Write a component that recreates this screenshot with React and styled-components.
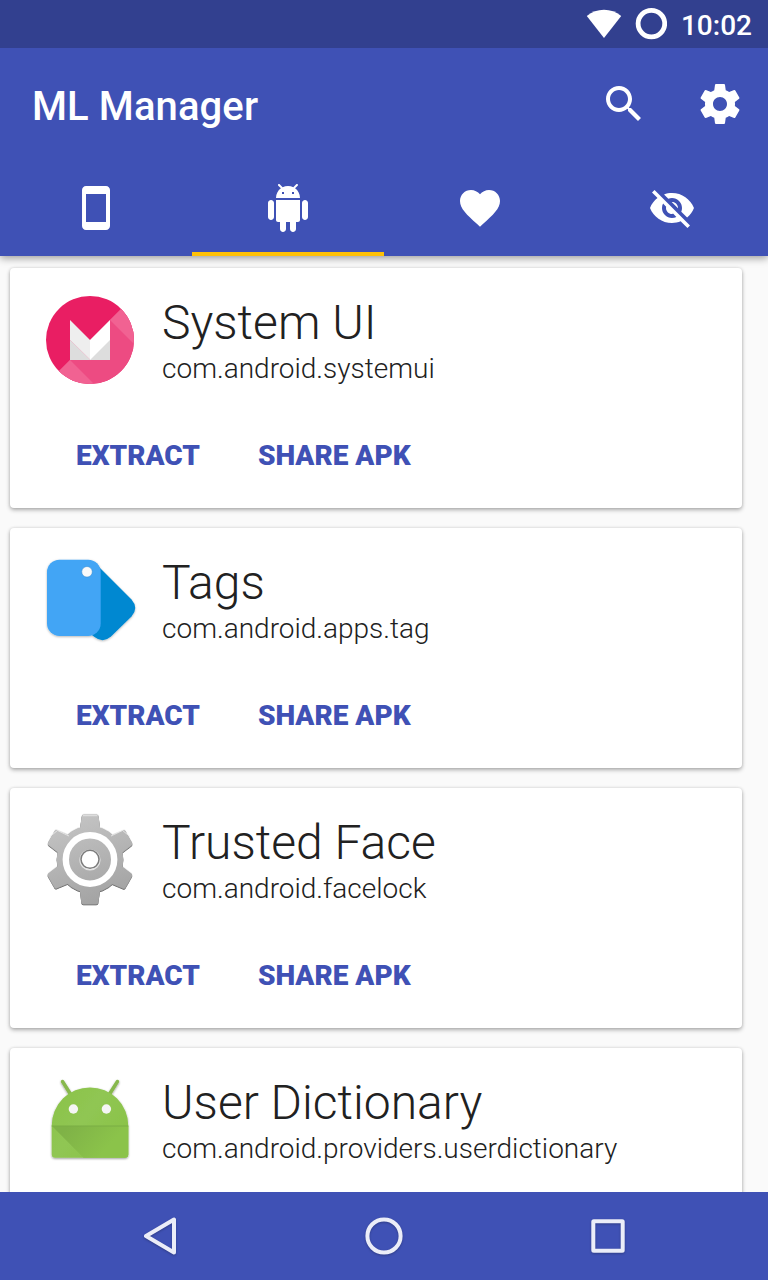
import React from "react";
import styled, { createGlobalStyle } from "styled-components";

const GlobalStyle = createGlobalStyle`
  * { box-sizing: border-box; }
  body { margin: 0; background: #fafafa; font-family: Roboto, sans-serif; }
`;

const Screen = styled.div`
  display: flex;
  flex-direction: column;
  width: 768px;
  height: 1280px;
  overflow: hidden;
  background: #fafafa;
`;

const StatusBar = styled.div`
  position: relative;
  z-index: 2;
  display: flex;
  flex: none;
  align-items: center;
  justify-content: flex-end;
  height: 48px;
  padding-right: 16px;
  background: #32408f;
  color: #fff;
`;

const StatusIcon = styled.svg`
  display: block;
  width: ${(p) => p.$width}px;
  height: 48px;
  margin-right: ${(p) => p.$after}px;
`;

const Clock = styled.span`
  font-size: 28px;
  font-weight: 500;
  line-height: 33px;
  padding-top: 3px;
`;

const Header = styled.header`
  position: relative;
  z-index: 1;
  flex: none;
  height: 208px;
  background: #3f51b5;
  color: #fff;
  box-shadow: 0 2px 8px rgba(0, 0, 0, 0.4);
`;

const Toolbar = styled.div`
  display: flex;
  align-items: center;
  height: 112px;
  padding: 0 24px 0 32px;
`;

const Title = styled.h1`
  flex: 1;
  margin: 0;
  padding-top: 6px;
  font-size: 40px;
  font-weight: 500;
  letter-spacing: 0.1px;
  line-height: 48px;
`;

const Actions = styled.div`
  display: flex;
  gap: 48px;
`;

const IconButton = styled.button`
  display: block;
  padding: 0;
  border: 0;
  background: none;
  color: inherit;
`;

const Glyph = styled.svg`
  display: block;
  width: 48px;
  height: 48px;
  fill: currentColor;
`;

const Tabs = styled.nav`
  display: grid;
  grid-template-columns: repeat(4, 1fr);
  height: 96px;
`;

const Tab = styled.div`
  display: flex;
  align-items: center;
  justify-content: center;
  padding-top: 4px;
  border-bottom: 4px solid ${(p) => (p.$active ? "#ffc107" : "transparent")};
`;

const List = styled.main`
  display: flex;
  flex: 1;
  flex-direction: column;
  gap: 20px;
  min-height: 0;
  padding: 12px 26px 0 10px;
  overflow: hidden;
`;

const Card = styled.article`
  flex: none;
  height: 240px;
  padding: 24px 32px;
  border-radius: 4px;
  background: #fff;
  box-shadow: 0 2px 4px rgba(0, 0, 0, 0.3), 0 0 3px rgba(0, 0, 0, 0.12);
`;

const AppInfo = styled.div`
  display: flex;
  gap: 24px;
`;

const AppIcon = styled.svg`
  display: block;
  flex: none;
  width: 96px;
  height: 96px;
  overflow: visible;
`;

const AppText = styled.div`
  padding-top: 3px;
  color: #212121;
  font-weight: 300;
  white-space: nowrap;
`;

const AppName = styled.div`
  font-size: 48px;
  line-height: 56px;
`;

const PackageName = styled.div`
  padding-top: 1px;
  font-size: 28px;
  line-height: 33px;
`;

const CardActions = styled.div`
  display: flex;
  gap: 58px;
  padding: 51px 0 0 34px;
`;

const TextButton = styled.button`
  padding: 0;
  border: 0;
  background: none;
  color: #3f51b5;
  font-family: inherit;
  font-size: 28px;
  font-weight: 900;
  line-height: 33px;
`;

const NavBar = styled.footer`
  position: relative;
  display: flex;
  flex: none;
  justify-content: center;
  gap: 176px;
  align-items: center;
  height: 88px;
  background: #3f51b5;
`;

const NavGlyph = styled.svg`
  display: block;
  width: 48px;
  height: 48px;
  fill: none;
  stroke: #ebedf8;
  stroke-width: 4;
  stroke-linejoin: round;
  filter: drop-shadow(0 1px 1px rgba(0, 0, 0, 0.25));
`;

const paths = {
  search:
    "M15.5 14h-.79l-.28-.27C15.41 12.59 16 11.11 16 9.5 16 5.91 13.09 3 9.5 3S3 5.91 3 9.5 5.91 16 9.5 16c1.61 0 3.09-.59 4.23-1.57l.27.28v.79l5 4.99L20.49 19l-4.99-5zm-6 0C7.01 14 5 11.99 5 9.5S7.01 5 9.5 5 14 7.01 14 9.5 11.99 14 9.5 14z",
  settings:
    "M19.43 12.98c.04-.32.07-.64.07-.98s-.03-.66-.07-.98l2.11-1.65c.19-.15.24-.42.12-.64l-2-3.46c-.12-.22-.39-.3-.61-.22l-2.49 1c-.52-.4-1.08-.73-1.69-.98l-.38-2.65C14.46 2.18 14.25 2 14 2h-4c-.25 0-.46.18-.49.42l-.38 2.65c-.61.25-1.17.59-1.69.98l-2.49-1c-.23-.09-.49 0-.61.22l-2 3.46c-.13.22-.07.49.12.64l2.11 1.65c-.04.32-.07.65-.07.98s.03.66.07.98l-2.11 1.65c-.19.15-.24.42-.12.64l2 3.46c.12.22.39.3.61.22l2.49-1c.52.4 1.08.73 1.69.98l.38 2.65c.03.24.24.42.49.42h4c.25 0 .46-.18.49-.42l.38-2.65c.61-.25 1.17-.59 1.69-.98l2.49 1c.23.09.49 0 .61-.22l2-3.46c.12-.22.07-.49-.12-.64l-2.11-1.65zM12 15.5c-1.93 0-3.5-1.57-3.5-3.5s1.57-3.5 3.5-3.5 3.5 1.57 3.5 3.5-1.57 3.5-3.5 3.5z",
  phone:
    "M17 1.01L7 1c-1.1 0-1.99.9-1.99 2v18c0 1.1.89 2 1.99 2h10c1.1 0 2-.9 2-2V3c0-1.1-.9-1.99-2-1.99zM17 19H7V5h10v14z",
  android:
    "M6 18c0 .55.45 1 1 1h1v3.5c0 .83.67 1.5 1.5 1.5s1.5-.67 1.5-1.5V19h2v3.5c0 .83.67 1.5 1.5 1.5s1.5-.67 1.5-1.5V19h1c.55 0 1-.45 1-1V8H6v10zM3.5 8C2.67 8 2 8.67 2 9.5v7c0 .83.67 1.5 1.5 1.5S5 17.33 5 16.5v-7C5 8.67 4.33 8 3.5 8zm17 0c-.83 0-1.5.67-1.5 1.5v7c0 .83.67 1.5 1.5 1.5s1.5-.67 1.5-1.5v-7c0-.83-.67-1.5-1.5-1.5zm-4.97-5.84l1.3-1.3c.2-.2.2-.51 0-.71-.2-.2-.51-.2-.71 0l-1.48 1.48C13.85 1.23 12.95 1 12 1c-.96 0-1.86.23-2.66.63L7.85.15c-.2-.2-.51-.2-.71 0-.2.2-.2.51 0 .71l1.31 1.31C6.97 3.26 6 5.01 6 7h12c0-1.99-.97-3.75-2.47-4.84zM10 5H9V4h1v1zm5 0h-1V4h1v1z",
  heart:
    "M12 21.35l-1.45-1.32C5.4 15.36 2 12.28 2 8.5 2 5.42 4.42 3 7.5 3c1.74 0 3.41.81 4.5 2.09C13.09 3.81 14.76 3 16.5 3 19.58 3 22 5.42 22 8.5c0 3.78-3.4 6.86-8.55 11.54L12 21.35z",
  hidden:
    "M12 7c2.76 0 5 2.24 5 5 0 .65-.13 1.26-.36 1.83l2.92 2.92c1.51-1.26 2.7-2.89 3.43-4.75-1.73-4.39-6-7.5-11-7.5-1.4 0-2.74.25-3.98.7l2.16 2.16C10.74 7.13 11.35 7 12 7zM2 4.27l2.28 2.28.46.46C3.08 8.3 1.78 10.02 1 12c1.73 4.39 6 7.5 11 7.5 1.55 0 3.03-.3 4.38-.84l.42.42L19.73 22 21 20.73 3.27 3 2 4.27zM7.53 9.8l1.55 1.55c-.05.21-.08.43-.08.65 0 1.66 1.34 3 3 3 .22 0 .44-.03.65-.08l1.55 1.55c-.67.33-1.41.53-2.2.53-2.76 0-5-2.24-5-5 0-.79.2-1.53.53-2.2zm4.31-.78l3.15 3.15.02-.16c0-1.66-1.34-3-3-3l-.17.01z",
};

function Icon({ name }) {
  return (
    <Glyph viewBox="0 0 24 24" aria-hidden="true">
      <path d={paths[name]} />
    </Glyph>
  );
}

function MarshmallowIcon() {
  return (
    <AppIcon viewBox="0 0 96 96">
      <defs>
        <clipPath id="disc">
          <circle cx="48" cy="48" r="44" />
        </clipPath>
      </defs>
      <g clipPath="url(#disc)">
        <rect width="96" height="96" fill="#e91e63" />
        <path d="M96 0V96H0Z" fill="#ed4b82" />
        <path d="M68 28L84 12H96V56Z" fill="#f16292" />
        <path d="M28 68L12 84V96H56Z" fill="#f16292" />
      </g>
      <path d="M28 28L48 48V68H28Z" fill="#eee" />
      <path d="M68 28L48 48V68H68Z" fill="#fff" />
      <path d="M28 48L48 68H28ZM68 48L48 68H68Z" fill="#ddd" />
      <path d="M28 48L48 67.6" stroke="#e9a5bd" strokeWidth="0.5" />
    </AppIcon>
  );
}

function TagsIcon() {
  return (
    <AppIcon viewBox="0 0 96 96">
      <defs>
        <filter id="tagShadow" x="-20%" y="-20%" width="140%" height="140%">
          <feDropShadow dx="0" dy="0.8" stdDeviation="1.1" floodOpacity="0.3" />
        </filter>
      </defs>
      <g filter="url(#tagShadow)">
        <path
          d="M52 10L57 15L89.500 47.500Q97 56 89.500 64.500L69 84.500Q61 91.500 52.500 85L46 80Z"
          fill="#0288d1"
        />
        <rect x="5" y="7.700" width="53.700" height="76.300" rx="12.500" fill="#42a5f5" />
      </g>
      <circle cx="45" cy="19.800" r="5.300" fill="#fafafa" stroke="#3c8fd2" strokeWidth="0.600" />
    </AppIcon>
  );
}

const TOOTH = "M37.500 20L39.700 4.500Q40 2.700 41.600 2.700H54.700Q56.300 2.700 56.600 4.500L58.600 20Z";

function GearIcon() {
  return (
    <AppIcon viewBox="0 0 96 96">
      <defs>
        <linearGradient id="metal" gradientUnits="userSpaceOnUse" x1="30" y1="4" x2="60" y2="92">
          <stop offset="0" stopColor="#c4c4c4" />
          <stop offset="1" stopColor="#a2a2a2" />
        </linearGradient>
        <mask id="gearShape">
          <g fill="#fff">
            <circle cx="48" cy="47.500" r="33.300" />
            {[0, 60, 120, 180, 240, 300].map((a) => (
              <path key={a} d={TOOTH} transform={`rotate(${a} 48 47.5)`} />
            ))}
          </g>
        </mask>
        <filter id="bevel" x="-10%" y="-10%" width="120%" height="120%">
          <feDropShadow dx="0" dy="-0.3" stdDeviation="0.4" floodColor="#777" floodOpacity="0.6" />
          <feDropShadow dx="0" dy="0.9" stdDeviation="0.6" floodColor="#222" floodOpacity="0.75" />
        </filter>
      </defs>
      <g filter="url(#bevel)">
        <rect width="96" height="96" fill="url(#metal)" mask="url(#gearShape)" />
      </g>
      <path
        d="M41 3.700H55.300M8 24.500L15.500 18.500L27 24M88 24.500L80.500 18.500L69 24"
        fill="none"
        stroke="#ececec"
        strokeWidth="1"
        strokeOpacity="0.8"
      />
      <circle cx="48" cy="47.500" r="24.200" fill="none" stroke="#fff" strokeWidth="6.400" />
      <circle cx="48" cy="48" r="9.900" fill="#fff" stroke="#e4e4e4" strokeWidth="1.400" />
      <circle cx="48" cy="47.300" r="9" fill="#fff" stroke="#7c7c7c" strokeWidth="1.500" />
    </AppIcon>
  );
}

function DroidIcon() {
  return (
    <AppIcon viewBox="0 0 96 96">
      <defs>
        <linearGradient id="fold" gradientUnits="userSpaceOnUse" x1="25" y1="55" x2="58" y2="84">
          <stop offset="0" stopColor="#7fb247" />
          <stop offset="1" stopColor="#8bc34a" />
        </linearGradient>
        <linearGradient id="dome" gradientUnits="userSpaceOnUse" x1="20" y1="15" x2="78" y2="60">
          <stop offset="0" stopColor="#8bc34a" />
          <stop offset="0.5" stopColor="#90c653" />
          <stop offset="1" stopColor="#8bc34a" />
        </linearGradient>
        <filter id="droidShadow" x="-20%" y="-20%" width="140%" height="140%">
          <feDropShadow dx="0" dy="1" stdDeviation="0.9" floodOpacity="0.4" />
        </filter>
      </defs>
      <g filter="url(#droidShadow)">
        <path d="M20.600 9.600L30 24.500M75.400 9.600L66 24.500" stroke="#87b84d" strokeWidth="3.600" strokeLinecap="round" />
        <path
          d="M9.700 53.700a38.300 38.300 0 0 1 76.600 0V82.200a3.500 3.500 0 0 1-3.500 3.500H13.200a3.500 3.500 0 0 1-3.500-3.500Z"
          fill="url(#dome)"
        />
      </g>
      <path d="M10 54H86.300V82.200a3.500 3.500 0 0 1-3.500 3.500H41.500Z" fill="url(#fold)" />
      <path d="M9.700 54H86.300" stroke="#7bae45" strokeWidth="1.200" />
      <circle cx="31.400" cy="37" r="4.700" fill="#f5f5f5" />
      <circle cx="64.400" cy="37" r="4.700" fill="#f5f5f5" />
    </AppIcon>
  );
}

const tabs = [
  { name: "phone" },
  { name: "android", active: true },
  { name: "heart" },
  { name: "hidden" },
];

const actions = ["EXTRACT", "SHARE APK"];

const apps = [
  { name: "System UI", pkg: "com.android.systemui", Art: MarshmallowIcon, actions },
  { name: "Tags", pkg: "com.android.apps.tag", Art: TagsIcon, actions },
  { name: "Trusted Face", pkg: "com.android.facelock", Art: GearIcon, actions },
  { name: "User Dictionary", pkg: "com.android.providers.userdictionary", Art: DroidIcon },
];

export default function App() {
  return (
    <Screen>
      <GlobalStyle />
      <StatusBar>
        <StatusIcon $width={36} $after={13} viewBox="0 0 36 48">
          <path d="M0.800 16C10.500 7.800 25.500 7.800 35.200 16L18 38Z" fill="#fff" />
        </StatusIcon>
        <StatusIcon $width={32} $after={14} viewBox="0 0 32 48">
          <circle cx="16.400" cy="23.600" r="13.300" fill="none" stroke="#fff" strokeWidth="4.800" />
        </StatusIcon>
        <Clock>10:02</Clock>
      </StatusBar>
      <Header>
        <Toolbar>
          <Title>ML Manager</Title>
          <Actions>
            <IconButton aria-label="Search"><Icon name="search" /></IconButton>
            <IconButton aria-label="Settings"><Icon name="settings" /></IconButton>
          </Actions>
        </Toolbar>
        <Tabs>
          {tabs.map((t) => (
            <Tab key={t.name} $active={t.active}><Icon name={t.name} /></Tab>
          ))}
        </Tabs>
      </Header>
      <List>
        {apps.map(({ name, pkg, Art, actions: labels }) => (
          <Card key={pkg}>
            <AppInfo>
              <Art />
              <AppText>
                <AppName>{name}</AppName>
                <PackageName>{pkg}</PackageName>
              </AppText>
            </AppInfo>
            {labels && (
              <CardActions>
                {labels.map((label) => (
                  <TextButton key={label}>{label}</TextButton>
                ))}
              </CardActions>
            )}
          </Card>
        ))}
      </List>
      <NavBar>
        <NavGlyph viewBox="0 0 48 48"><path d="M10 24L38 7.500V40.500Z" /></NavGlyph>
        <NavGlyph viewBox="0 0 48 48"><circle cx="24" cy="24" r="16.600" /></NavGlyph>
        <NavGlyph viewBox="0 0 48 48"><rect x="9.300" y="9.300" width="29.400" height="29.400" rx="0.500" /></NavGlyph>
      </NavBar>
    </Screen>
  );
}
